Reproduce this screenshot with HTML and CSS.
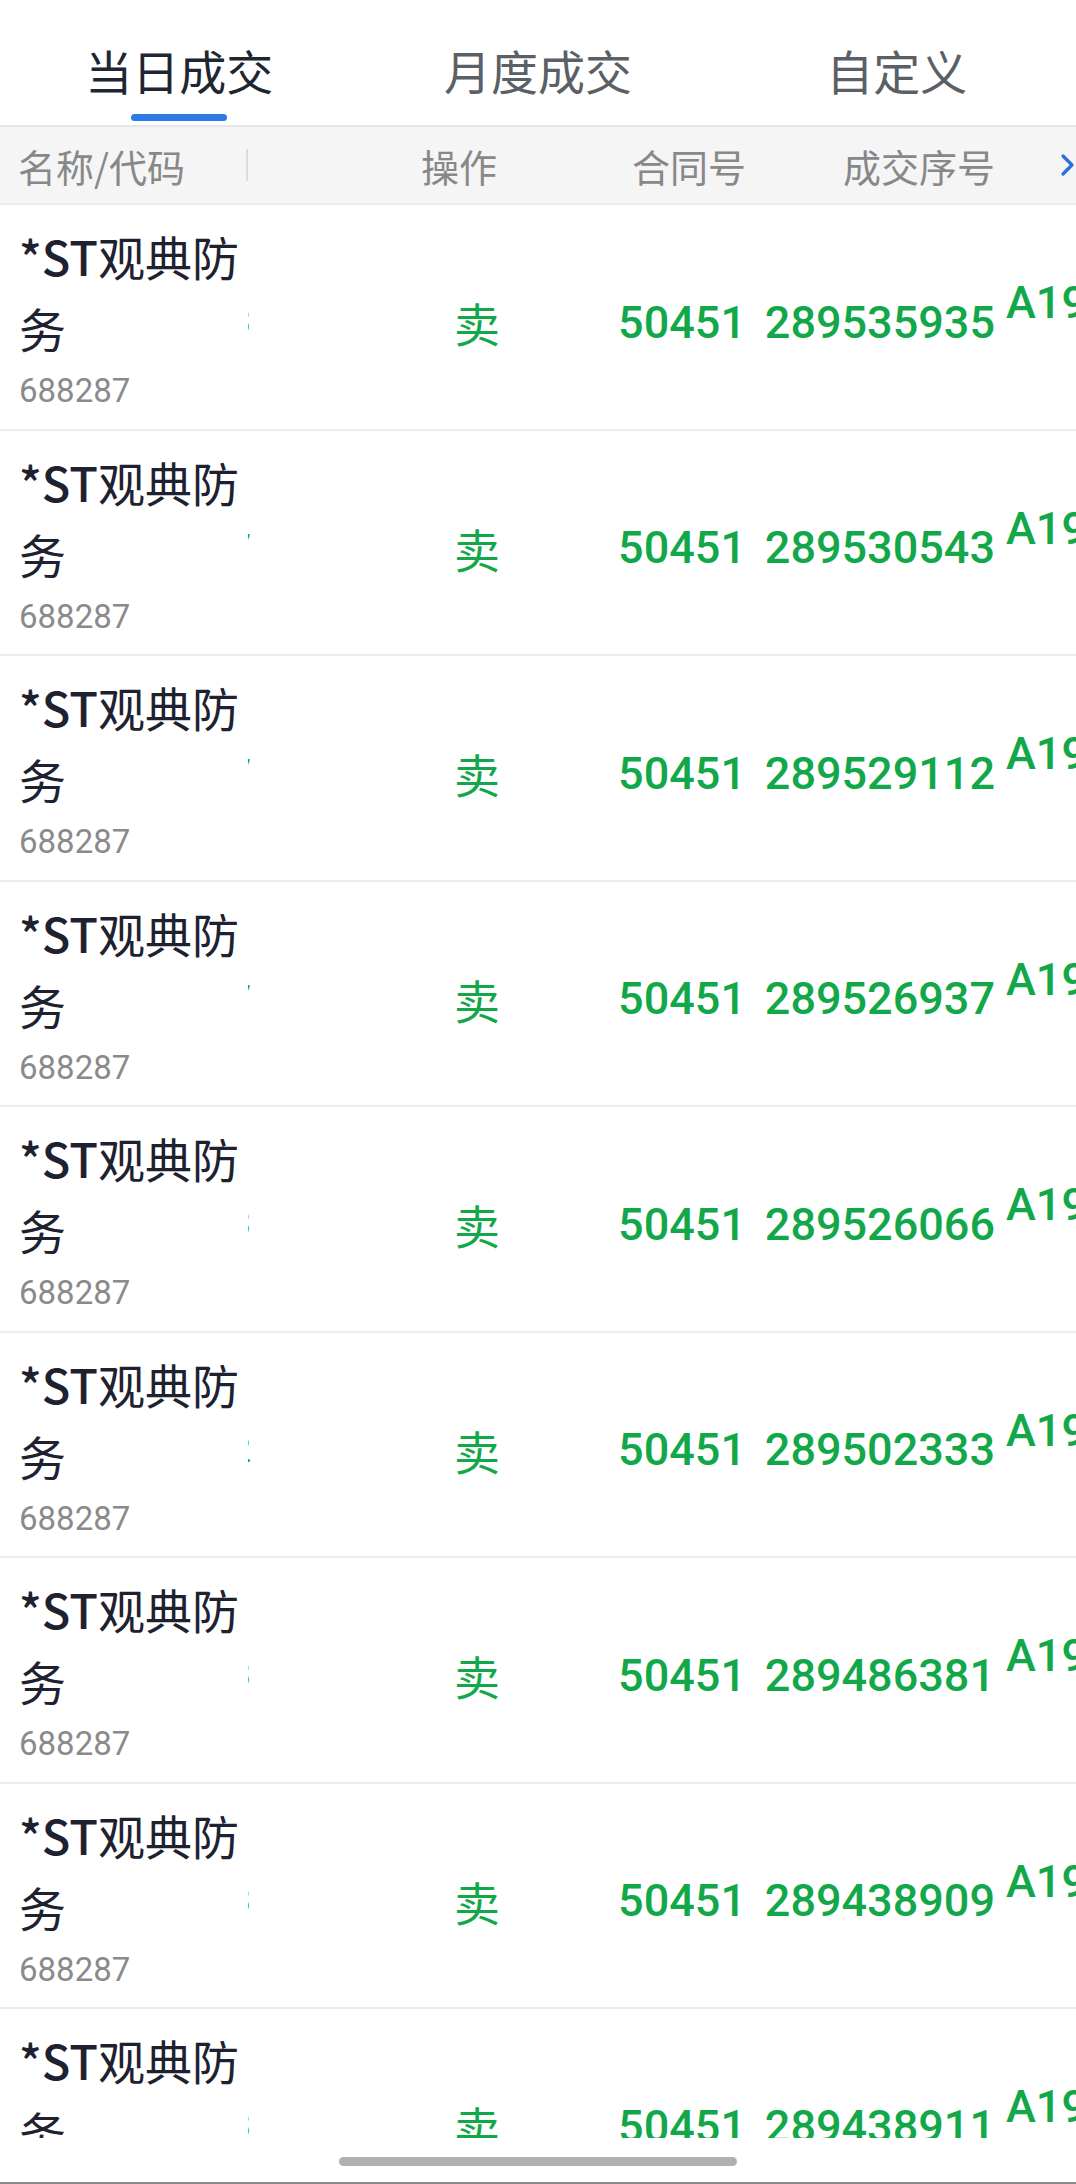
FILE: index.html
```html
<!DOCTYPE html>
<html>
<head>
    <meta charset="utf-8">
    <title>当日成交</title>
    <link rel="stylesheet" href="styles.css">
</head>
<body>

<div class="page">
    <div class="tabs">
        <div class="tab active">当日成交<span class="bar"></span></div>
        <div class="tab">月度成交</div>
        <div class="tab">自定义</div>
    </div>

    <div class="head">
        <div class="c-name"><span class="head-label">名称/代码</span><span class="sep"></span></div>
        <div class="c-peek"></div>
        <div class="c-op">操作</div>
        <div class="c-no">合同号</div>
        <div class="c-seq">成交序号</div>
        <div class="c-more"></div>
        <div class="more-btn">
            <svg width="16" height="24" viewBox="0 0 16 24"><polyline points="3,3 12,12 3,21" fill="none" stroke="#2a6fdb" stroke-width="3.2" stroke-linecap="round" stroke-linejoin="round"/></svg>
        </div>
    </div>

    <div class="list">
        <div class="row">
            <div class="c-name"><div class="stock"><span class="st">*ST</span>观典防务</div><div class="code">688287</div></div>
            <div class="c-peek"><span>3</span></div>
            <div class="c-op">卖</div>
            <div class="c-no num">50451</div>
            <div class="c-seq num">289535935</div>
            <div class="c-more num">A19</div>
        </div>
        <div class="row">
            <div class="c-name"><div class="stock"><span class="st">*ST</span>观典防务</div><div class="code">688287</div></div>
            <div class="c-peek"><span>7</span></div>
            <div class="c-op">卖</div>
            <div class="c-no num">50451</div>
            <div class="c-seq num">289530543</div>
            <div class="c-more num">A19</div>
        </div>
        <div class="row">
            <div class="c-name"><div class="stock"><span class="st">*ST</span>观典防务</div><div class="code">688287</div></div>
            <div class="c-peek"><span>7</span></div>
            <div class="c-op">卖</div>
            <div class="c-no num">50451</div>
            <div class="c-seq num">289529112</div>
            <div class="c-more num">A19</div>
        </div>
        <div class="row">
            <div class="c-name"><div class="stock"><span class="st">*ST</span>观典防务</div><div class="code">688287</div></div>
            <div class="c-peek"><span>7</span></div>
            <div class="c-op">卖</div>
            <div class="c-no num">50451</div>
            <div class="c-seq num">289526937</div>
            <div class="c-more num">A19</div>
        </div>
        <div class="row">
            <div class="c-name"><div class="stock"><span class="st">*ST</span>观典防务</div><div class="code">688287</div></div>
            <div class="c-peek"><span>3</span></div>
            <div class="c-op">卖</div>
            <div class="c-no num">50451</div>
            <div class="c-seq num">289526066</div>
            <div class="c-more num">A19</div>
        </div>
        <div class="row">
            <div class="c-name"><div class="stock"><span class="st">*ST</span>观典防务</div><div class="code">688287</div></div>
            <div class="c-peek"><span>2</span></div>
            <div class="c-op">卖</div>
            <div class="c-no num">50451</div>
            <div class="c-seq num">289502333</div>
            <div class="c-more num">A19</div>
        </div>
        <div class="row">
            <div class="c-name"><div class="stock"><span class="st">*ST</span>观典防务</div><div class="code">688287</div></div>
            <div class="c-peek"><span>3</span></div>
            <div class="c-op">卖</div>
            <div class="c-no num">50451</div>
            <div class="c-seq num">289486381</div>
            <div class="c-more num">A19</div>
        </div>
        <div class="row">
            <div class="c-name"><div class="stock"><span class="st">*ST</span>观典防务</div><div class="code">688287</div></div>
            <div class="c-peek"><span>3</span></div>
            <div class="c-op">卖</div>
            <div class="c-no num">50451</div>
            <div class="c-seq num">289438909</div>
            <div class="c-more num">A19</div>
        </div>
        <div class="row">
            <div class="c-name"><div class="stock"><span class="st">*ST</span>观典防务</div><div class="code">688287</div></div>
            <div class="c-peek"><span>3</span></div>
            <div class="c-op">卖</div>
            <div class="c-no num">50451</div>
            <div class="c-seq num">289438911</div>
            <div class="c-more num">A19</div>
        </div>
    </div>

    <div class="bottom">
        <span class="home"></span>
    </div>
</div>

</body>
</html>
```

FILE: styles.css
```css
body {
    margin: 0;
    background-color: #fff;
    font-family: "Noto Sans CJK SC", "Noto Sans", sans-serif;
}

.page {
    width: 1076px;
    height: 2184px;
    overflow: hidden;
    display: flex;
    flex-direction: column;
}

/* tabs */

.tabs {
    display: grid;
    grid-template-columns: repeat(3, 1fr);
    height: 125px;
    box-sizing: border-box;
    padding-top: 46px;
}

.tab {
    display: flex;
    flex-direction: column;
    align-items: center;
    font-size: 47px;
    line-height: 47px;
    color: #5b5f66;
}

.tab.active {
    color: #1e2631;
}

.tab .bar {
    width: 96px;
    height: 7px;
    margin-top: 21px;
    border-radius: 4px;
    background-color: #2d7be6;
}

/* table header */

.head {
    position: relative;
    display: flex;
    height: 80px;
    box-sizing: border-box;
    border-top: 2px solid #e6e6e6;
    border-bottom: 2px solid #ebebeb;
    background-color: #f5f5f5;
    font-size: 38px;
    color: #888;
}

.head > div {
    display: flex;
    align-items: center;
    justify-content: flex-end;
}

.head .c-name {
    justify-content: space-between;
}

.head-label {
    padding-left: 18px;
}

.sep {
    width: 2px;
    height: 32px;
    background-color: #dcdcdc;
}

.more-btn {
    position: absolute;
    right: 0;
    top: 0;
    bottom: 0;
    width: 22px;
    background-color: #f5f5f5;
}

/* columns */

.c-name {
    width: 248px;
    flex-shrink: 0;
    box-sizing: border-box;
}

.c-peek {
    width: 3px;
    flex-shrink: 0;
}

.c-op {
    width: 253px;
    flex-shrink: 0;
    box-sizing: border-box;
    padding-right: 7px;
    text-align: right;
}

.c-no {
    width: 247px;
    flex-shrink: 0;
    box-sizing: border-box;
    padding-right: 5px;
    text-align: right;
}

.c-seq {
    width: 248px;
    flex-shrink: 0;
    box-sizing: border-box;
    padding-right: 4px;
    text-align: right;
}

.c-more {
    flex: 1;
    overflow: hidden;
    padding-left: 7px;
}

/* rows */

.list {
    height: 1933px;
    overflow: hidden;
}

.row {
    display: flex;
    height: 225.5px;
    box-sizing: border-box;
    border-bottom: 2px solid #ededed;
}

.row .c-name {
    padding: 15px 0 0 19px;
}

.stock {
    font-size: 47px;
    line-height: 72px;
    color: #1d2130;
}

.st {
    font-weight: 500;
}

.code {
    font-family: Roboto, sans-serif;
    font-size: 33px;
    line-height: 48px;
    padding-top: 3px;
    color: #8a8a8a;
}

.row > div:not(.c-name) {
    display: flex;
    align-items: center;
    padding-top: 11px;
    color: #12a84a;
    white-space: nowrap;
}

.row .c-op,
.row .c-no,
.row .c-seq {
    justify-content: flex-end;
}

.row .c-op {
    font-size: 46px;
    padding-right: 4px;
}

.row .c-peek {
    overflow: hidden;
    justify-content: flex-end;
    font-family: Roboto, sans-serif;
    font-size: 36px;
}

.num {
    font-family: Roboto, sans-serif;
    font-size: 45px;
    font-weight: 500;
}

.row .c-more {
    padding-top: 0;
    padding-bottom: 39px;
}

/* bottom */

.bottom {
    flex: 1;
    display: flex;
    justify-content: center;
    border-bottom: 2px solid #8c8c8c;
}

.home {
    width: 398px;
    height: 9px;
    margin-top: 19px;
    border-radius: 5px;
    background-color: #b0b0b0;
}
```
